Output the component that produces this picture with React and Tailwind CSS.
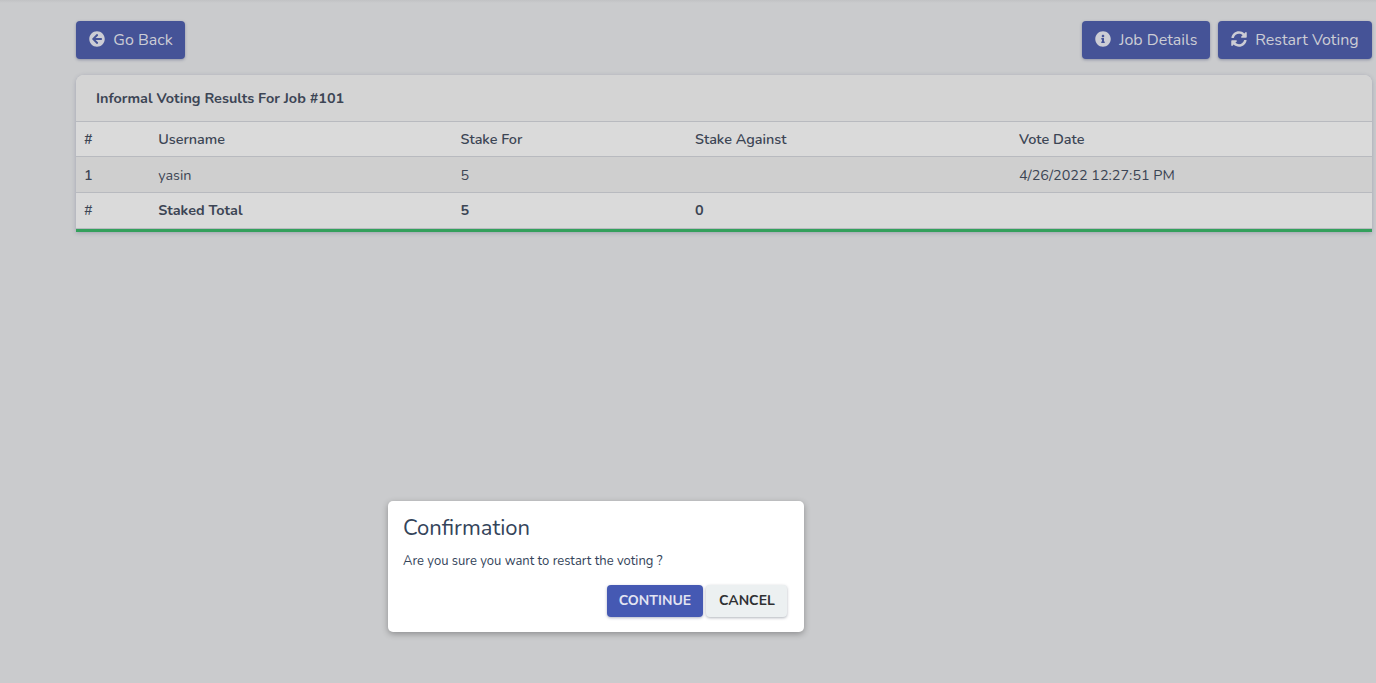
import React from "react";
import { FaArrowCircleLeft, FaInfoCircle, FaSyncAlt } from "react-icons/fa";

function ActionButton({ icon: Icon, label, width }) {
  return (
    <button
      className={`flex h-[38px] items-center whitespace-nowrap rounded-[4px] bg-[#455397] pl-[13.4px] text-[16px] text-[#cccdd5] shadow-[0_1px_3px_rgba(30,40,90,0.35)] ${width}`}
    >
      <Icon className="mb-[2px] mr-[7.9px] h-4 w-4 shrink-0" />
      <span>{label}</span>
    </button>
  );
}

const columns =
  "grid grid-cols-[74.2px_302.3px_234.5px_324px_1fr] items-center border-b border-[#b8babf] [&>span]:pl-2";

export default function App() {
  return (
    <div className="relative h-[683px] w-[1376px] overflow-hidden bg-[#cacbcd] font-['Nunito','Lato',sans-serif] text-[#3c4554]">
      <div className="h-[3px] bg-gradient-to-b from-[#c1c2c4] to-[#cacbcd]" />
      <main className="ml-[76px] mr-[4px] pt-[18px]">
        <div className="flex">
          <ActionButton icon={FaArrowCircleLeft} label="Go Back" width="w-[109px]" />
          <div className="ml-auto flex gap-2">
            <ActionButton icon={FaInfoCircle} label="Job Details" width="w-[128px]" />
            <ActionButton icon={FaSyncAlt} label="Restart Voting" width="w-[154px]" />
          </div>
        </div>

        <section className="mt-4 overflow-hidden rounded-t-[8px] border-b-[3px] border-[#34a05c] bg-[#dadada] text-[14.4px] leading-[22px] shadow-[0_1px_4px_rgba(60,65,110,0.3)]">
          <h2 className="flex h-[47px] items-center border-b border-[#b8babf] bg-[#d4d4d4] pl-5 font-bold">
            Informal Voting Results For Job #101
          </h2>
          <div className={`${columns} h-[35px] font-semibold`}>
            <span>#</span>
            <span>Username</span>
            <span>Stake For</span>
            <span>Stake Against</span>
            <span>Vote Date</span>
          </div>
          <div className={`${columns} h-[36px] bg-[#cfcfcf]`}>
            <span className="font-semibold">1</span>
            <span>yasin</span>
            <span>5</span>
            <span />
            <span>4/26/2022 12:27:51 PM</span>
          </div>
          <div className={`${columns} h-[36px] pb-[2px]`}>
            <span>#</span>
            <span className="font-bold">Staked Total</span>
            <span className="font-bold">5</span>
            <span className="font-bold">0</span>
            <span />
          </div>
        </section>
      </main>

      <div
        role="dialog"
        className="absolute left-[388px] top-[501px] flex h-[131px] w-[416px] flex-col rounded-[5px] bg-white px-[15px] pt-[13px] text-[#34445a] shadow-[0_2px_6px_rgba(0,0,0,0.3)]"
      >
        <h3 className="text-[22px] leading-[29px]">Confirmation</h3>
        <p className="mt-[8px] text-[13px] leading-[20px]">Are you sure you want to restart the voting ?</p>
        <div className="mt-[14px] flex justify-end gap-[3.5px] pr-[1.6px] text-[14px] font-bold">
          <button className="h-[32px] w-[96px] rounded-[4px] bg-[#4559b3] pb-[2px] text-[#e2e4f2] shadow-[0_1px_3px_rgba(30,40,90,0.35)]">
            CONTINUE
          </button>
          <button className="h-[32px] w-[81px] rounded-[4px] bg-[#ecf0f1] pb-[2px] text-[#2f3033] shadow-[0_1px_3px_rgba(30,40,60,0.35)]">
            CANCEL
          </button>
        </div>
      </div>
    </div>
  );
}
